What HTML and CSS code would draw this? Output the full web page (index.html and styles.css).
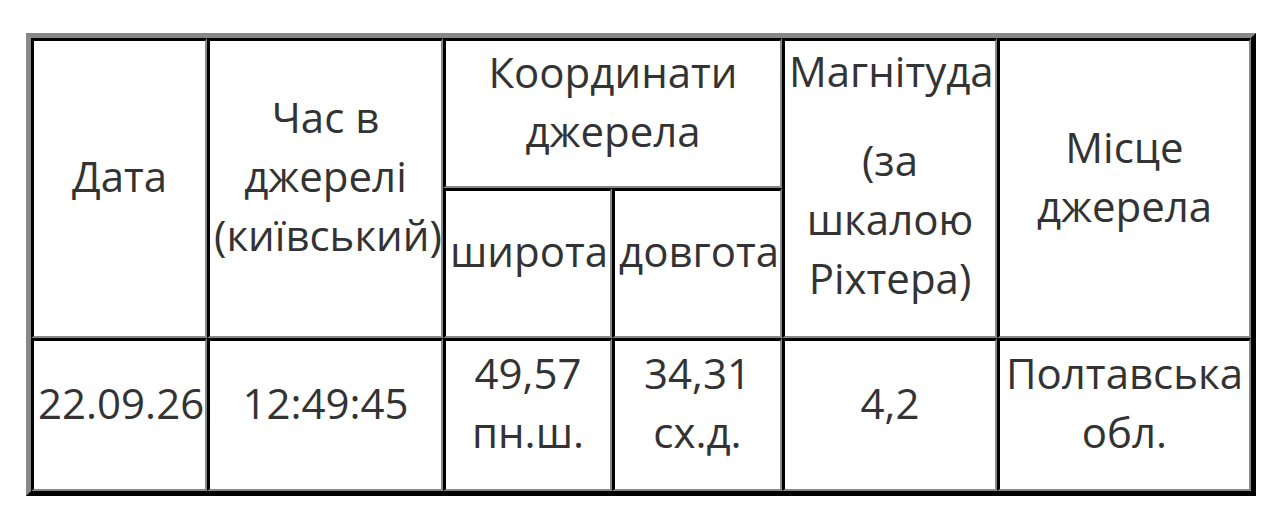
FILE: index.html
```html
<!DOCTYPE html>
<html lang="uk">
<head>
<meta charset="utf-8">
<title>Землетрус</title>
<link rel="stylesheet" href="styles.css">
</head>
<body>
<table class="quake">
  <colgroup>
    <col class="c-date">
    <col class="c-time">
    <col class="c-lat">
    <col class="c-lon">
    <col class="c-mag">
    <col class="c-place">
  </colgroup>
  <tr class="r1">
    <td rowspan="2">Дата</td>
    <td rowspan="2">Час в джерелі (київський)</td>
    <td colspan="2">Координати джерела</td>
    <td rowspan="2" class="mag">Магнітуда<p class="mag-note">(за шкалою Ріхтера)</p></td>
    <td rowspan="2">Місце джерела</td>
  </tr>
  <tr class="r2">
    <td>широта</td>
    <td>довгота</td>
  </tr>
  <tr class="r3">
    <td>22.09.26</td>
    <td>12:49:45</td>
    <td>49,57 пн.ш.</td>
    <td>34,31 сх.д.</td>
    <td>4,2</td>
    <td>Полтавська обл.</td>
  </tr>
</table>
</body>
</html>
```

FILE: styles.css
```css
html, body {
  margin: 0;
  padding: 0;
  background: #fff;
}

body {
  padding: 33px 0 0 26px;
  font-family: "Open Sans", "Noto Sans", sans-serif;
  font-size: 42px;
  line-height: 59px;
  color: #333;
}

.quake {
  table-layout: fixed;
  width: 1230px;
  border-collapse: separate;
  border-spacing: 0;
  border-style: solid;
  border-width: 5px;
  border-color: #888 #000 #000 #888;
}

.c-date { width: 176px; }
.c-time { width: 236px; }
.c-lat { width: 169px; }
.c-lon { width: 170px; }
.c-mag { width: 215px; }
.c-place { width: 254px; }

.quake td {
  box-sizing: border-box;
  text-align: center;
  vertical-align: middle;
  padding: 0 4px 26px 4px;
  border-style: solid;
  border-width: 3px 2px 2px 3px;
  border-color: #000 #888 #888 #000;
}

.quake td.mag {
  vertical-align: top;
}

.mag-note {
  margin: 30px 0 0 0;
}

.r1 { height: 150px; }
.r2 { height: 150px; }
.r3 { height: 153px; }
```
